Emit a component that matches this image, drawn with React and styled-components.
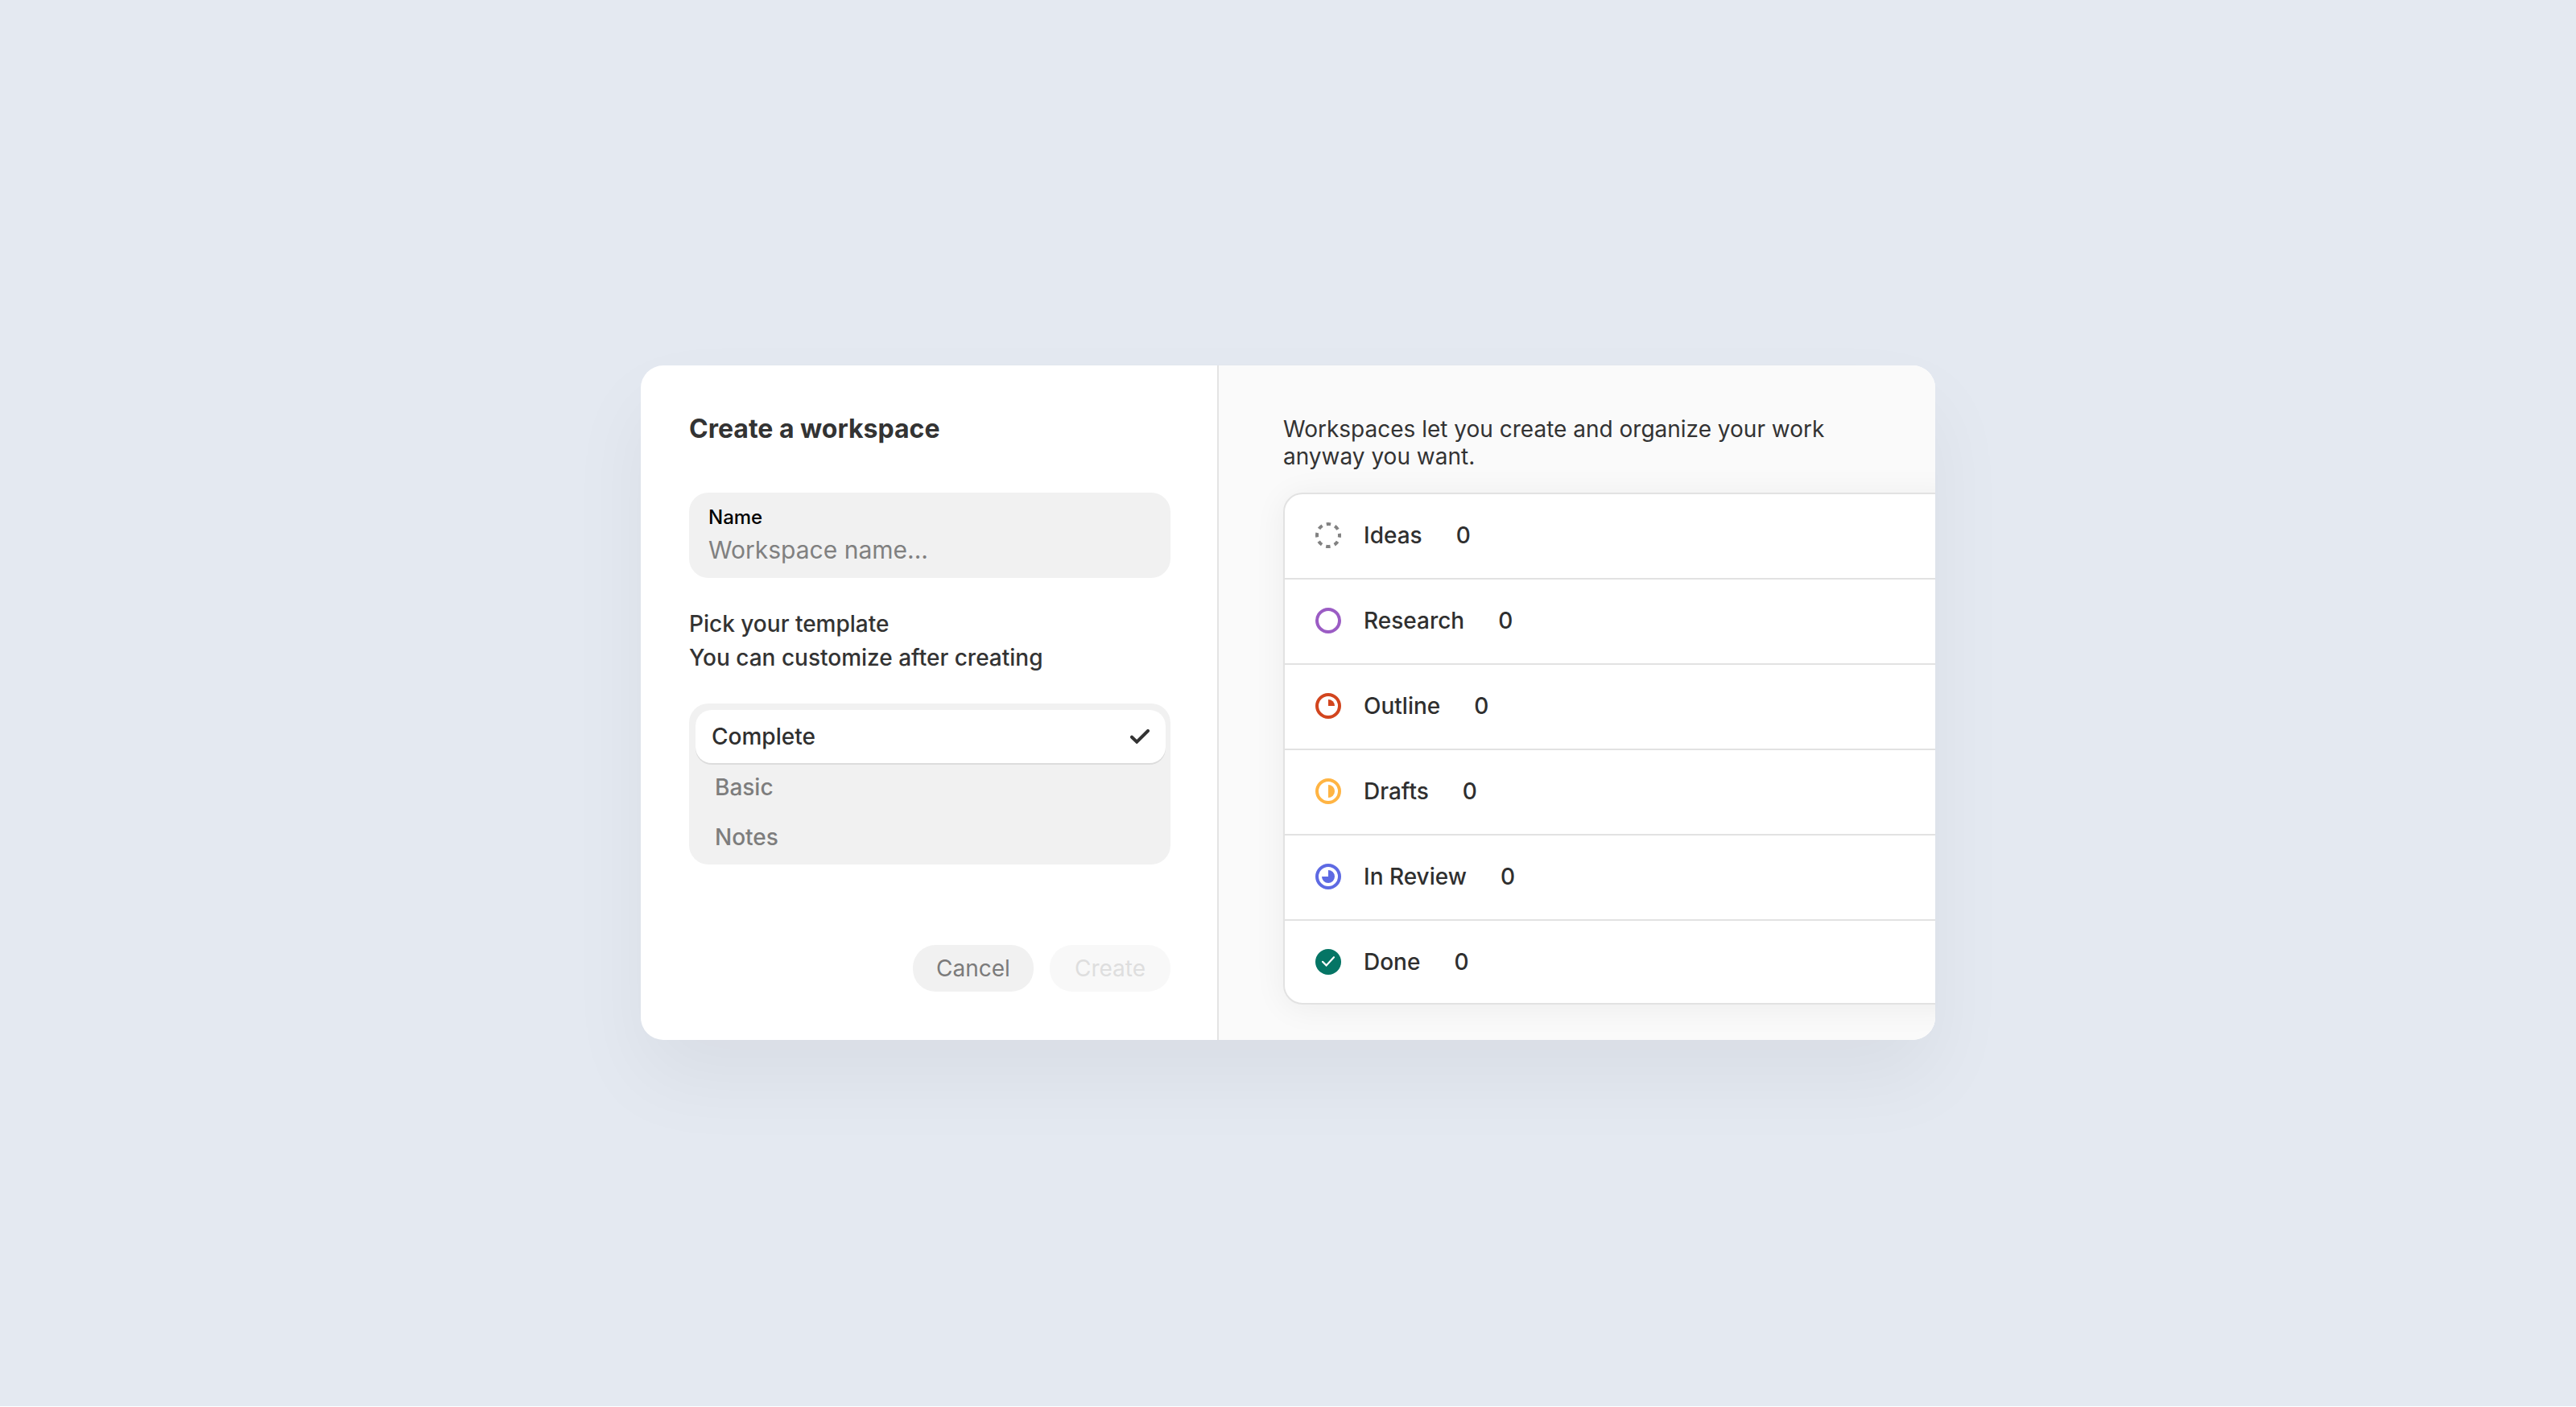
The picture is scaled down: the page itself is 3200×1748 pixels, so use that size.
import React, { useState } from "react";
import styled, { createGlobalStyle } from "styled-components";

const GlobalStyle = createGlobalStyle`
  *, *::before, *::after { box-sizing: border-box; }
  body {
    margin: 0;
    background: #ffffff;
    color: #2f2f2f;
    font-family: Inter, "Liberation Sans", sans-serif;
    font-size: 28px;
    line-height: 34px;
    -webkit-font-smoothing: antialiased;
  }
`;

const Page = styled.main`
  min-height: 100vh;
  display: flex;
  align-items: center;
  justify-content: center;
  padding-bottom: 1px;
  border-bottom: 1px solid #ffffff;
  background: #e4e9f1;
`;

const Card = styled.div`
  width: 100%;
  max-width: 1608px;
  display: grid;
  grid-template-columns: 718fr 890fr;
  overflow: hidden;
  border-radius: 28px;
  background: #ffffff;
  box-shadow: 0 48px 100px rgba(0, 20, 10, 0.05);
`;

const Form = styled.form`
  display: flex;
  flex-direction: column;
  padding: 60px 58px 60px 60px;
  border-right: 2px solid #e4e4e4;
`;

const Title = styled.h1`
  margin: 0 0 60px;
  font-size: 32px;
  line-height: 38px;
  font-weight: 700;
  color: #333333;
`;

const Field = styled.label`
  display: flex;
  flex-direction: column;
  padding: 16px 24px 10px;
  border-radius: 24px;
  background: #f1f1f1;
`;

const FieldName = styled.span`
  font-size: 24px;
  line-height: 30px;
  font-weight: 500;
  color: #000000;
`;

const FieldInput = styled.input`
  width: 100%;
  height: 50px;
  padding: 0;
  border: 0;
  outline: 0;
  background: transparent;
  font: inherit;
  font-size: 30px;
  color: #2f2f2f;
  &::placeholder { color: #808080; opacity: 1; }
`;

const Intro = styled.p`
  margin: 36px 0;
  line-height: 42px;
  font-weight: 500;
  color: #333333;
`;

const IntroLine = styled.span`
  display: block;
`;

const Options = styled.fieldset`
  min-width: 0;
  margin: 0;
  padding: 8px 6px 2px 8px;
  border: 0;
  border-radius: 24px;
  background: #f1f1f1;
`;

const Option = styled.label`
  display: flex;
  align-items: center;
  justify-content: space-between;
  height: ${(p) => (p.$selected ? 66 : 62)}px;
  padding: ${(p) => (p.$selected ? "0 20px" : "0 20px 2px 24px")};
  border-radius: 20px;
  font-weight: 500;
  color: ${(p) => (p.$selected ? "#2f2f2f" : "#7d7d7d")};
  background: ${(p) => (p.$selected ? "#ffffff" : "transparent")};
  box-shadow: ${(p) => (p.$selected ? "0 2px 0 #dcdcdc" : "none")};
  cursor: pointer;
`;

const Radio = styled.input`
  appearance: none;
  width: 0;
  height: 0;
  margin: 0;
`;

const OptionText = styled.span`
  flex: 1;
`;

const Actions = styled.div`
  display: flex;
  justify-content: flex-end;
  gap: 20px;
  margin-top: 100px;
`;

const Button = styled.button`
  width: 150px;
  height: 58px;
  padding: 0;
  border: 0;
  border-radius: 28px;
  background: #f1f1f1;
  font: inherit;
  color: #7b7b7b;
  cursor: pointer;
  &:disabled {
    background: #f8f8f8;
    color: #dedede;
    cursor: default;
  }
`;

const Preview = styled.section`
  min-width: 0;
  padding: 62px 0 44px 80px;
  background: #fafafa;
`;

const Blurb = styled.p`
  max-width: 700px;
  margin: 0 0 28px;
  color: #333333;
`;

const Stages = styled.ul`
  margin: 0 -40px 0 0;
  padding: 0;
  list-style: none;
  border: 2px solid #e2e2e2;
  border-radius: 24px;
  background: #ffffff;
  box-shadow: 0 4px 40px rgba(0, 0, 0, 0.06);
`;

const Stage = styled.li`
  display: flex;
  align-items: center;
  padding: 34px 38px 36px;
  border-bottom: 2px solid #e2e2e2;
  font-weight: 500;
  &:last-child {
    padding-bottom: 34px;
    border-bottom: 0;
  }
`;

const StageName = styled.span`
  margin: 0 42px 0 28px;
`;

const StageIcon = styled.svg`
  flex: none;
  width: 32px;
  height: 32px;
`;

const CheckIcon = styled.svg`
  flex: none;
  width: 24px;
  height: 18px;
`;

function Ring({ color }) {
  return <circle cx="16" cy="16" r="14" fill="none" stroke={color} strokeWidth="4" />;
}

const DASH = (Math.PI * 28) / 16;

const glyphs = {
  ideas: (
    <circle
      cx="16" cy="16" r="14" fill="none" stroke="#828282" strokeWidth="4"
      strokeDasharray={`${DASH} ${DASH}`} strokeDashoffset={DASH / 2}
    />
  ),
  research: <Ring color="#9b5cc4" />,
  outline: (
    <>
      <Ring color="#d2451e" />
      <path d="M16 16V8a8 8 0 0 1 8 8z" fill="#d2451e" />
    </>
  ),
  drafts: (
    <>
      <Ring color="#ffb443" />
      <path d="M16 8a8 8 0 0 1 0 16z" fill="#ffb443" />
    </>
  ),
  review: (
    <>
      <Ring color="#5e6ae3" />
      <path d="M16 16V8a8 8 0 1 1-8 8z" fill="#5e6ae3" />
    </>
  ),
  done: (
    <>
      <circle cx="16" cy="16" r="16" fill="#057565" />
      <path
        d="M9 15.8l4.6 4.6L23 10.2" fill="none" stroke="#ffffff"
        strokeWidth="2.2" strokeLinecap="round" strokeLinejoin="miter"
      />
    </>
  ),
};

const stages = [
  { id: "ideas", name: "Ideas", count: 0 },
  { id: "research", name: "Research", count: 0 },
  { id: "outline", name: "Outline", count: 0 },
  { id: "drafts", name: "Drafts", count: 0 },
  { id: "review", name: "In Review", count: 0 },
  { id: "done", name: "Done", count: 0 },
];

const templates = ["Complete", "Basic", "Notes"];

export default function App() {
  const [name, setName] = useState("");
  const [template, setTemplate] = useState("Complete");

  return (
    <>
      <GlobalStyle />
      <Page>
        <Card>
          <Form onSubmit={(e) => e.preventDefault()}>
            <Title>Create a workspace</Title>
            <Field htmlFor="workspace-name">
              <FieldName>Name</FieldName>
              <FieldInput
                id="workspace-name"
                type="text"
                placeholder="Workspace name..."
                value={name}
                onChange={(e) => setName(e.target.value)}
              />
            </Field>
            <Intro id="template-intro">
              <IntroLine>Pick your template</IntroLine>
              <IntroLine>You can customize after creating</IntroLine>
            </Intro>
            <Options aria-labelledby="template-intro">
              {templates.map((t) => (
                <Option key={t} $selected={t === template} htmlFor={`template-${t}`}>
                  <Radio
                    id={`template-${t}`}
                    type="radio"
                    name="template"
                    value={t}
                    checked={t === template}
                    onChange={() => setTemplate(t)}
                  />
                  <OptionText>{t}</OptionText>
                  {t === template && (
                    <CheckIcon viewBox="0 0 24 18" aria-hidden="true">
                      <path
                        d="M2 9.7l6.2 6L22 2" fill="none" stroke="#333333"
                        strokeWidth="4" strokeLinecap="round" strokeLinejoin="miter"
                      />
                    </CheckIcon>
                  )}
                </Option>
              ))}
            </Options>
            <Actions>
              <Button type="button">Cancel</Button>
              <Button type="submit" disabled={name === ""}>Create</Button>
            </Actions>
          </Form>
          <Preview>
            <Blurb>Workspaces let you create and organize your work anyway you want.</Blurb>
            <Stages>
              {stages.map((s) => (
                <Stage key={s.id}>
                  <StageIcon viewBox="0 0 32 32" aria-hidden="true">{glyphs[s.id]}</StageIcon>
                  <StageName>{s.name}</StageName>
                  <span>{s.count}</span>
                </Stage>
              ))}
            </Stages>
          </Preview>
        </Card>
      </Page>
    </>
  );
}
